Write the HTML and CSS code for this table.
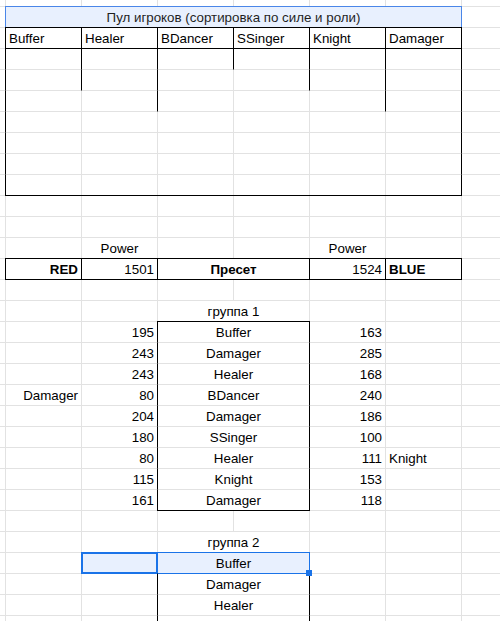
FILE: index.html
```html
<!DOCTYPE html>
<html lang="ru">
<head>
<meta charset="utf-8">
<title>Пул игроков</title>
<link rel="stylesheet" href="styles.css">
</head>
<body>
<div class="sheet">
  <div class="row spacer"></div>

  <div class="row">
    <div class="cell k16 ac title">Пул игроков (сортировка по силе и роли)</div>
  </div>
  <div class="row">
    <div class="cell k1 b">Buffer</div>
    <div class="cell k2 b">Healer</div>
    <div class="cell k3 b">BDancer</div>
    <div class="cell k4 b">SSinger</div>
    <div class="cell k5 b">Knight</div>
    <div class="cell k6 b">Damager</div>
  </div>
  <div class="row">
    <div class="cell k16 bl br"></div>
    <div class="cell k1 br"></div>
    <div class="cell k2 br"></div>
    <div class="cell k3 br"></div>
    <div class="cell k4 br"></div>
    <div class="cell k5 br"></div>
  </div>
  <div class="row">
    <div class="cell k16 bl br"></div>
    <div class="cell k1 br"></div>
    <div class="cell k2 br"></div>
    <div class="cell k4 br"></div>
    <div class="cell k5 br"></div>
  </div>
  <div class="row">
    <div class="cell k16 bl br"></div>
    <div class="cell k2 br"></div>
    <div class="cell k5 br"></div>
  </div>
  <div class="row"><div class="cell k16 bl br"></div></div>
  <div class="row"><div class="cell k16 bl br"></div></div>
  <div class="row"><div class="cell k16 bl br"></div></div>
  <div class="row"><div class="cell k16 bl br bb"></div></div>

  <div class="row"></div>
  <div class="row"></div>

  <div class="row">
    <div class="cell k2 ac">Power</div>
    <div class="cell k5 ac">Power</div>
  </div>
  <div class="row">
    <div class="cell k1 b ar bold">RED</div>
    <div class="cell k2 b ar">1501</div>
    <div class="cell k34 b ac bold w">Пресет</div>
    <div class="cell k5 b ar">1524</div>
    <div class="cell k6 b bold">BLUE</div>
  </div>
  <div class="row"></div>

  <div class="row">
    <div class="cell k34 ac w">группа 1</div>
  </div>
  <div class="row">
    <div class="cell k2 ar">195</div>
    <div class="cell k34 ac w bx bt">Buffer</div>
    <div class="cell k5 ar">163</div>
  </div>
  <div class="row">
    <div class="cell k2 ar">243</div>
    <div class="cell k34 ac w bx">Damager</div>
    <div class="cell k5 ar">285</div>
  </div>
  <div class="row">
    <div class="cell k2 ar">243</div>
    <div class="cell k34 ac w bx">Healer</div>
    <div class="cell k5 ar">168</div>
  </div>
  <div class="row">
    <div class="cell k1 ar">Damager</div>
    <div class="cell k2 ar">80</div>
    <div class="cell k34 ac w bx">BDancer</div>
    <div class="cell k5 ar">240</div>
  </div>
  <div class="row">
    <div class="cell k2 ar">204</div>
    <div class="cell k34 ac w bx">Damager</div>
    <div class="cell k5 ar">186</div>
  </div>
  <div class="row">
    <div class="cell k2 ar">180</div>
    <div class="cell k34 ac w bx">SSinger</div>
    <div class="cell k5 ar">100</div>
  </div>
  <div class="row">
    <div class="cell k2 ar">80</div>
    <div class="cell k34 ac w bx">Healer</div>
    <div class="cell k5 ar">111</div>
    <div class="cell k6">Knight</div>
  </div>
  <div class="row">
    <div class="cell k2 ar">115</div>
    <div class="cell k34 ac w bx">Knight</div>
    <div class="cell k5 ar">153</div>
  </div>
  <div class="row">
    <div class="cell k2 ar">161</div>
    <div class="cell k34 ac w bx bb">Damager</div>
    <div class="cell k5 ar">118</div>
  </div>
  <div class="row"></div>

  <div class="row">
    <div class="cell k34 ac w">группа 2</div>
  </div>
  <div class="row">
    <div class="cell k24 range"></div>
    <div class="cell k2 active"></div>
    <div class="cell k34 ac sel-text">Buffer<span class="handle"></span></div>
  </div>
  <div class="row">
    <div class="cell k34 ac w bx">Damager</div>
  </div>
  <div class="row">
    <div class="cell k34 ac w bx">Healer</div>
  </div>
  <div class="row">
    <div class="cell k34 ac w bx"></div>
  </div>
</div>
</body>
</html>
```

FILE: styles.css
```css
html, body {
  margin: 0;
  padding: 0;
  background: #fff;
  overflow: hidden;
}

body {
  font-family: "Liberation Sans", Arial, sans-serif;
  font-size: 13.33px;
  color: #000;
}

.sheet {
  width: 500px;
  height: 621px;
  overflow: hidden;
  background-color: #fff;
  background-image:
    linear-gradient(to right, #e2e2e2 1px, transparent 1px),
    linear-gradient(to bottom, #e2e2e2 1px, transparent 1px);
  background-size: 76px 100%, 100% 21px;
  background-position: 5px 0, 0 6px;
}

.row {
  display: grid;
  grid-template-columns: 5px repeat(7, 76px);
  grid-template-rows: 21px;
  height: 21px;
}

.row.spacer {
  height: 6px;
  grid-template-rows: 6px;
}

.cell {
  grid-row: 1;
  box-sizing: border-box;
  min-width: 0;
  margin: 0 -1px -1px 0;
  border: 1px solid transparent;
  background-clip: padding-box;
  display: flex;
  align-items: flex-end;
  justify-content: flex-start;
  padding: 0 3px 2px;
  line-height: 15px;
  white-space: nowrap;
  overflow: hidden;
}

/* column placement */
.k1 { grid-column: 2; }
.k2 { grid-column: 3; }
.k3 { grid-column: 4; }
.k4 { grid-column: 5; }
.k5 { grid-column: 6; }
.k6 { grid-column: 7; }
.k34 { grid-column: 4 / 6; }
.k24 { grid-column: 3 / 6; }
.k16 { grid-column: 2 / 8; }

/* alignment */
.ar { justify-content: flex-end; }
.ac { justify-content: center; }
.bold { font-weight: bold; }

/* borders */
.b { border-color: #000; }
.bl { border-left-color: #000; }
.br { border-right-color: #000; }
.bt { border-top-color: #000; }
.bb { border-bottom-color: #000; }
.bx { border-left-color: #000; border-right-color: #000; }

/* merged cells hide the inner gridline */
.w { background-color: #fff; }

.title {
  background-color: #e8f0fe;
  background-clip: border-box;
  border-color: #4a86e8;
  color: #1f1f1f;
}

/* selection */
.range {
  background-color: #e8f0fe;
  background-clip: border-box;
  border-color: #1a73e8;
}

.active {
  border: 2px solid #1a73e8;
  background-color: #e8f0fe;
  background-clip: border-box;
}

.sel-text {
  position: relative;
  overflow: visible;
}

.handle {
  position: absolute;
  right: -3px;
  bottom: -3px;
  width: 6px;
  height: 6px;
  background: #1a73e8;
}
```
